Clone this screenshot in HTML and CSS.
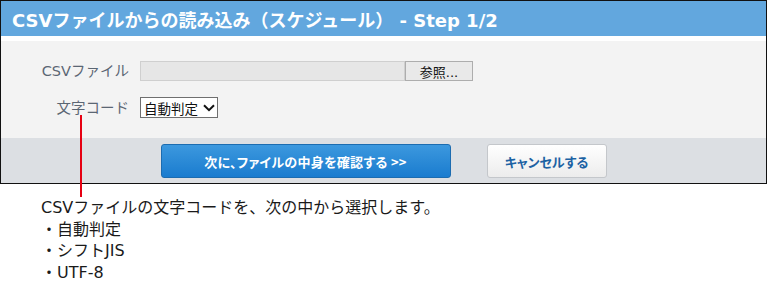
FILE: index.html
```html
<!DOCTYPE html>
<html lang="ja">
<head>
<meta charset="utf-8">
<title>CSVファイルからの読み込み</title>
<link rel="stylesheet" href="styles.css">
</head>
<body>
<div class="page">
  <div class="dialog">
    <div class="dialog-title">CSVファイルからの読み込み（スケジュール） - Step 1/2</div>
    <div class="dialog-body">
      <div class="form-label">CSVファイル</div>
      <div class="file-field">
        <span class="file-path"></span>
        <span class="browse-btn">参照...</span>
      </div>
      <div class="form-label">文字コード</div>
      <div class="select-field">
        <span class="select-box">自動判定
          <svg class="chevron" width="12" height="8" viewBox="0 0 12 8"><path d="M1 1.2 L6 6.2 L11 1.2" fill="none" stroke="#111" stroke-width="2"/></svg>
        </span>
      </div>
    </div>
    <div class="dialog-footer">
      <span class="btn btn-primary">次に、ファイルの中身を確認する &gt;&gt;</span>
      <span class="btn btn-cancel">キャンセルする</span>
    </div>
  </div>
  <div class="callout-line"></div>
  <div class="note">
    <div>CSVファイルの文字コードを、次の中から選択します。</div>
    <div>・自動判定</div>
    <div>・シフトJIS</div>
    <div>・UTF-8</div>
  </div>
</div>
</body>
</html>
```

FILE: styles.css
```css
html, body {
  margin: 0;
  padding: 0;
  background: #ffffff;
}

.page {
  position: relative;
  width: 768px;
  height: 281px;
  overflow: hidden;
  font-family: "DejaVu Sans", "Noto Sans CJK JP", sans-serif;
}

.dialog {
  box-sizing: border-box;
  width: 767px;
  border: 1px solid #111;
  background: #fff;
}

.dialog-title {
  height: 35px;
  box-sizing: border-box;
  padding-left: 11px;
  display: flex;
  align-items: center;
  background: #62a7de;
  color: #fff;
  font-weight: bold;
  font-size: 18px;
  font-family: "DejaVu Sans", "Noto Sans CJK JP", sans-serif;
  margin-bottom: 5px;
}

.dialog-body {
  background: #f3f3f3;
  padding: 20px 0;
  display: grid;
  grid-template-columns: 128px auto;
  column-gap: 11px;
  row-gap: 16px;
  align-items: center;
}

.form-label {
  text-align: right;
  color: #5b6673;
  font-size: 14.5px;
  line-height: 20px;
}

.file-field {
  display: flex;
  height: 20px;
}

.file-path {
  box-sizing: border-box;
  width: 265px;
  height: 20px;
  background: #e6e6e6;
  border: 1px solid #cfcfcf;
}

.browse-btn {
  box-sizing: border-box;
  width: 68px;
  height: 20px;
  background: #e9e9e9;
  border: 1px solid #adadad;
  font-size: 13px;
  color: #111;
  display: flex;
  align-items: center;
  justify-content: center;
}

.select-field {
  display: flex;
  height: 21px;
}

.select-box {
  box-sizing: border-box;
  width: 78px;
  height: 21px;
  border: 1px solid #6f6f6f;
  background: #fff;
  font-size: 13.5px;
  color: #111;
  display: flex;
  align-items: center;
  padding-left: 3px;
  gap: 5px;
}

.chevron {
  display: block;
}

.dialog-footer {
  background: #dcdfe3;
  height: 45px;
  box-sizing: border-box;
  padding-top: 6px;
  display: flex;
  justify-content: center;
  align-items: flex-start;
  gap: 36px;
}

.btn {
  box-sizing: border-box;
  height: 34px;
  border-radius: 3px;
  display: flex;
  align-items: center;
  justify-content: center;
  font-weight: bold;
  font-size: 13px;
  font-family: "Noto Sans CJK JP", sans-serif;
  font-feature-settings: "palt";
}

.btn-primary {
  width: 290px;
  background: linear-gradient(#3c98de, #1a7ccf);
  border: 1px solid #1c6cb0;
  color: #fff;
  letter-spacing: 0.3px;
}

.btn-cancel {
  width: 120px;
  background: linear-gradient(#ffffff, #ececec);
  border: 1px solid #c4c7cb;
  color: #1c62a3;
}

.callout-line {
  position: absolute;
  left: 80px;
  top: 115px;
  width: 2px;
  height: 82px;
  background: #e60012;
}

.note {
  margin: 13px 0 0 41px;
  font-size: 16px;
  line-height: 21.5px;
  color: #1a1a1a;
}
```
